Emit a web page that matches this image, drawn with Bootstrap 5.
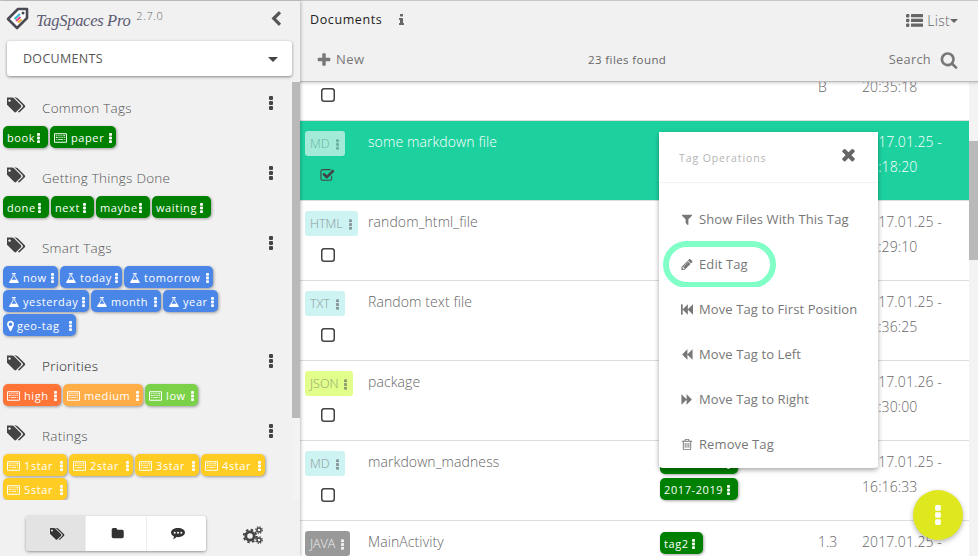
<!DOCTYPE html>
<html lang="en">
<head>
<meta charset="utf-8">
<title>TagSpaces Pro</title>
<link href="https://cdn.jsdelivr.net/npm/bootstrap@5.3.0/dist/css/bootstrap.min.css" rel="stylesheet">
<style>
html,body{height:556px;overflow:hidden}
body{font-family:"Open Sans","Liberation Sans",sans-serif;font-size:13px;color:#666;background:#fff;font-weight:300}
.ic{fill:currentColor;display:block;flex:none}
.app-shell{height:556px;border-top:1px solid #ccc}
.side-pane{width:300px;flex:none;background:#f1f1f1;position:relative;z-index:3;box-shadow:1px 0 3px rgba(0,0,0,.25)}
.brand-bar{height:40px;padding:6px 0 0 6px;flex:none}
.brand-name{font-family:"Liberation Serif",serif;font-style:italic;font-size:16.5px;color:#5b5b72;margin-left:7px;margin-top:-1px;line-height:30px;letter-spacing:-.3px}
.brand-ver{font-size:11px;color:#666;margin:2px 0 0 6px;line-height:14px;letter-spacing:.6px}
.brand-back{margin-left:auto;margin-right:16px;margin-top:4px;color:#555}
.loc-pick{width:285px;height:35px;flex:none;margin-left:7px;padding:2px 14px 0 16px;background:#fff;border-radius:3px;box-shadow:0 1px 3px rgba(0,0,0,.45);color:#555;font-size:12.5px;letter-spacing:.3px;font-weight:400;border:0}
.loc-caret{width:0;height:0;border-left:5px solid transparent;border-right:5px solid transparent;border-top:5px solid #444}
.tag-scroll{height:418px;margin-top:6px;flex:none}
.tag-body{width:292px;padding-top:14px}
.tag-rail{width:8px;flex:none;background:#f3f3f3}
.tag-thumb{height:336px;background:#b9b9b9}
.grp{height:70px;padding-left:3px}
.grp-big{height:118px}
.grp-two{height:76px}
.grp-head{height:30px;position:relative}
.grp-icon{margin:0 0 0 4px;color:#444}
.grp-title{margin-left:16px;margin-top:2px;font-size:13.5px;line-height:20px;color:#555;letter-spacing:.25px}
.grp-title-dark{color:#222}
.grp-menu{margin-left:auto;margin-right:19px;color:#444}
.chip{display:inline-flex;align-items:center;height:22px;border-radius:5px;color:#fff;font-size:11px;line-height:14px;font-weight:400;letter-spacing:.6px;padding:1px 4px 0 4px;box-shadow:1px 1px 3px rgba(0,0,0,.35);white-space:nowrap}
.chip .ic:first-child{margin-right:4px}
.chip .kb{margin-left:auto}
.chip-flask{padding-left:5px}
.chip-pin{padding-left:4px}
.chip-pin .ic:first-child{margin-right:3px}
.cw43{width:43px}.cw45{width:45px}.cw46{width:46px}.cw53{width:53px}.cw54{width:54px}.cw55{width:55px}.cw58{width:58px}.cw59{width:59px}.cw62{width:62px}.cw64{width:64px}.cw66{width:66px}.cw70{width:70px}.cw73{width:73px}.cw78{width:78px}.cw80{width:80px}.cw86{width:86px}.cw89{width:89px}
.chip-row{gap:2px}
.chip-green{background:#008000}
.chip-blue{background:#4a86e8}
.chip-red{background:#ff7537}
.chip-orange{background:#ffad46}
.chip-lime{background:#7bd148}
.chip-yellow{background:#ffcc24}
.side-foot{height:56px;flex:none;padding:0 0 0 26px;background:#f1f1f1}
.tab-grp{height:35px;width:180px;border-radius:3px;box-shadow:0 1px 3px rgba(0,0,0,.4);margin-top:16px;overflow:hidden}
.tab-cell{flex:1;background:#fff;color:#333;border-left:1px solid #eee;padding-left:4px}
.tab-on{background:#e3e3e3;border-left:0}
.gear-btn{margin-left:37px;margin-top:26px;color:#444}
.main-pane{min-width:0}
.top-bar{height:81px;background:#f1f1f1;border-bottom:1px solid #bbb;box-shadow:0 1px 3px rgba(0,0,0,.2);position:relative;z-index:2;flex:none}
.top-one{height:38px;padding:0 20px 0 10px}
.crumb{font-size:12.5px;color:#222;letter-spacing:.6px;font-weight:400}
.info-mark{margin-left:17px;color:#666}
.view-btn{margin-left:auto;color:#666;font-size:14px;letter-spacing:.3px}
.view-caret{width:0;height:0;border-left:4px solid transparent;border-right:4px solid transparent;border-top:4px solid #666;margin-top:2px}
.top-two{height:42px;padding:0 20px 0 17px;position:relative}
.new-btn{font-size:13px;letter-spacing:.5px;color:#777;gap:5px;font-weight:400}
.found{position:absolute;left:288px;font-size:11.5px;color:#666;letter-spacing:.4px;font-weight:400}
.find-btn{margin-left:auto;font-size:12.8px;color:#777;gap:9px;letter-spacing:.3px;font-weight:400}
.file-area{height:474px}
.file-list{flex:1;min-width:0}
.file-rail{width:9px;flex:none;background:#f3f3f3}
.file-thumb{height:119px;margin-top:59px;background:#b9b9b9}
.f-row{height:80px;border-bottom:1px solid #ddd;position:relative}
.f-row-end{height:35px;border-bottom:0}
.f-row-cut{height:39px;border-bottom:1px solid #ddd}
.f-row-sel{background:#1dd19f;color:#fff}
.f-left{width:68px;flex:none;padding:10px 0 0 5px}
.f-type{display:inline-flex;align-items:center;height:25px;border-radius:3px;font-size:12.5px;padding:2px 6px 0 5px;color:#8a9a9a;gap:6px}
.t-aqua{background:#cdf3f2}
.t-sel{background:#a3ebd8;color:#6cb3a6}
.t-lime{background:#e1ff8a;color:#8f9f70}
.t-gray{background:#999;color:#eee}
.f-box{margin:12px 0 0 16px;color:#444}
.f-box-top{margin-top:-4px}
.f-box-on{margin-left:14px}
.f-name{flex:1;padding:11px 0 0;font-size:14px;line-height:20px;letter-spacing:.1px;color:#666}
.f-row-sel .f-name{color:#fff}
.f-size{width:44px;flex:none;padding-top:8px;font-size:14px;line-height:25px}
.f-date{width:107px;flex:none;padding-top:8px;font-size:14px;line-height:25px;letter-spacing:.1px}
.f-cut-up{padding-top:0;line-height:10px}
.f-tags{position:absolute;left:360px;top:11px;gap:4px}
.pop-panel{position:absolute;left:659px;top:132px;width:219px;height:336px;z-index:4;border:0;border-radius:4px;box-shadow:0 2px 5px rgba(0,0,0,.35);color:#777}
.pop-head{height:51px;padding:0 20px 0 20px;border-bottom:1px solid #f2f2f2;background:#fff}
.pop-title{font-size:10.5px;color:#b5b5b5;letter-spacing:.9px;font-weight:400;padding-top:4px}
.pop-close{margin-left:auto;color:#666;margin-bottom:5px}
.pop-item{height:45px;padding:0 0 0 22px;gap:6px;font-size:13px;letter-spacing:.1px;color:#777;border:0;background:#fff;position:relative;font-weight:400}
.pop-items{padding-top:14px}
.pop-ring{position:absolute;left:4px;top:-1px;width:113px;height:47px;border:6px solid #80ffc6;border-radius:24px}
.fab-btn{position:absolute;left:913px;top:490px;width:50px;height:50px;border-radius:50%;background:#dfe81f;box-shadow:0 2px 5px rgba(0,0,0,.3);z-index:5;color:#fff}
</style>
</head>
<body>
<svg class="d-none" xmlns="http://www.w3.org/2000/svg">
<symbol id="i-tags" viewBox="0 0 1920 1792"><path d="M384 448q0-53-37.5-90.5t-90.5-37.5-90.5 37.5-37.5 90.5 37.5 90.5 90.5 37.5 90.5-37.5 37.5-90.5zm1067 576q0 53-37 90l-491 492q-39 37-91 37-53 0-90-37l-715-716q-38-37-64.5-101t-26.5-117v-416q0-52 38-90t90-38h416q53 0 117 26.5t102 64.5l715 714q37 39 37 91zm384 0q0 53-37 90l-491 492q-39 37-91 37-36 0-59-14t-53-45l470-470q37-37 37-90 0-52-37-91l-715-714q-38-38-102-64.5t-117-26.5h224q53 0 117 26.5t102 64.5l715 714q37 39 37 91z"/></symbol>
<symbol id="i-kebab" viewBox="0 0 4 14"><rect width="4" height="4" rx="1"/><rect y="5" width="4" height="4" rx="1"/><rect y="10" width="4" height="4" rx="1"/></symbol>
<symbol id="i-keys" viewBox="0 0 14 10"><path fill-rule="evenodd" d="M1 0h12a1 1 0 0 1 1 1v8a1 1 0 0 1-1 1H1a1 1 0 0 1-1-1V1a1 1 0 0 1 1-1zm0 1v8h12V1zM2 2h1v1H2zm2 0h1v1H4zm2 0h1v1H6zm2 0h1v1H8zm2 0h2v1h-2zM2 4h2v1H2zm3 0h1v1H5zm2 0h1v1H7zm2 0h1v1H9zm2 0h1v1h-1zM2 6h1v1H2zm2 0h6v1H4zm7 0h1v1h-1z"/></symbol>
<symbol id="i-flask" viewBox="0 0 1664 1792"><path d="M1591 1448q56 89 21.5 152.5t-140.5 63.5h-1152q-106 0-140.5-63.5t21.5-152.5l503-793v-399h-64q-26 0-45-19t-19-45 19-45 45-19h512q26 0 45 19t19 45-19 45-45 19h-64v399zm-779-725l-272 429h712l-272-429-20-31v-436h-128v436z"/></symbol>
<symbol id="i-pin" viewBox="0 0 1024 1792"><path d="M768 640q0-106-75-181t-181-75-181 75-75 181 75 181 181 75 181-75 75-181zm256 0q0 109-33 179l-364 774q-16 33-47.5 52t-67.5 19-67.5-19-46.5-52l-365-774q-33-70-33-179 0-212 150-362t362-150 362 150 150 362z"/></symbol>
<symbol id="i-back" viewBox="0 0 1792 1792"><path d="M1427 301l-531 531 531 531q19 19 19 45t-19 45l-166 166q-19 19-45 19t-45-19l-742-742q-19-19-19-45t19-45l742-742q19-19 45-19t45 19l166 166q19 19 19 45t-19 45z"/></symbol>
<symbol id="i-plus" viewBox="0 0 1408 1792"><path d="M1408 736v192q0 40-28 68t-68 28h-416v416q0 40-28 68t-68 28h-192q-40 0-68-28t-28-68v-416h-416q-40 0-68-28t-28-68v-192q0-40 28-68t68-28h416v-416q0-40 28-68t68-28h192q40 0 68 28t28 68v416h416q40 0 68 28t28 68z"/></symbol>
<symbol id="i-info" viewBox="0 0 640 1792"><path d="M640 1344v128q0 26-19 45t-45 19h-512q-26 0-45-19t-19-45v-128q0-26 19-45t45-19h64v-384h-64q-26 0-45-19t-19-45v-128q0-26 19-45t45-19h384q26 0 45 19t19 45v576h64q26 0 45 19t19 45zm-128-1152v192q0 26-19 45t-45 19h-256q-26 0-45-19t-19-45v-192q0-26 19-45t45-19h256q26 0 45 19t19 45z"/></symbol>
<symbol id="i-list" viewBox="0 0 17 13"><rect y="0" width="3.4" height="3.4" rx="1.2"/><rect y="4.8" width="3.4" height="3.4" rx="1.2"/><rect y="9.6" width="3.4" height="3.4" rx="1.2"/><rect x="5" y="0" width="12" height="3.2" rx=".5"/><rect x="5" y="4.8" width="12" height="3.2" rx=".5"/><rect x="5" y="9.6" width="12" height="3.2" rx=".5"/></symbol>
<symbol id="i-search" viewBox="0 0 1792 1792"><path d="M1216 832q0-185-131.5-316.5t-316.5-131.5-316.5 131.5-131.5 316.5 131.5 316.5 316.5 131.5 316.5-131.5 131.5-316.5zm512 832q0 52-38 90t-90 38q-54 0-90-38l-343-342q-179 124-399 124-143 0-273.5-55.5t-225-150-150-225-55.5-273.5 55.5-273.5 150-225 225-150 273.5-55.5 273.5 55.5 225 150 150 225 55.5 273.5q0 220-124 399l343 343q37 37 37 90z"/></symbol>
<symbol id="i-x" viewBox="0 0 1792 1792"><path d="M1490 1322q0 40-28 68l-136 136q-28 28-68 28t-68-28l-294-294-294 294q-28 28-68 28t-68-28l-136-136q-28-28-28-68t28-68l294-294-294-294q-28-28-28-68t28-68l136-136q28-28 68-28t68 28l294 294 294-294q28-28 68-28t68 28l136 136q28 28 28 68t-28 68l-294 294 294 294q28 28 28 68z"/></symbol>
<symbol id="i-filter" viewBox="0 0 1408 1792"><path d="M1403 295q17 41-14 70l-493 493v742q0 42-39 59-13 5-25 5-27 0-45-19l-256-256q-19-19-19-45v-486l-493-493q-31-29-14-70 17-39 59-39h1280q42 0 59 39z"/></symbol>
<symbol id="i-pencil" viewBox="0 0 1536 1792"><path d="M363 1536l91-91-235-235-91 91v107h128v128h107zm523-928q0-22-22-22-10 0-17 7l-542 542q-7 7-7 17 0 22 22 22 10 0 17-7l542-542q7-7 7-17zm-54-192l416 416-832 832h-416v-416zm683 96q0 53-37 90l-166 166-416-416 166-165q36-38 90-38 53 0 91 38l235 234q37 39 37 91z"/></symbol>
<symbol id="i-first" viewBox="0 0 1792 1792"><path d="M1747 141q19-19 32-13t13 32v1472q0 26-13 32t-32-13l-710-710q-9-9-13-19v710q0 26-13 32t-32-13l-710-710q-9-9-13-19v678q0 26-19 45t-45 19h-128q-26 0-45-19t-19-45v-1408q0-26 19-45t45-19h128q26 0 45 19t19 45v678q4-10 13-19l710-710q19-19 32-13t13 32v710q4-10 13-19z"/></symbol>
<symbol id="i-left" viewBox="0 0 1792 1792"><path d="M1683 141q19-19 32-13t13 32v1472q0 26-13 32t-32-13l-710-710q-9-9-13-19v710q0 26-13 32t-32-13l-710-710q-19-19-19-45t19-45l710-710q19-19 32-13t13 32v710q4-10 13-19z"/></symbol>
<symbol id="i-right" viewBox="0 0 1792 1792"><path d="M109 1651q-19 19-32 13t-13-32v-1472q0-26 13-32t32 13l710 710q9 9 13 19v-710q0-26 13-32t32 13l710 710q19 19 19 45t-19 45l-710 710q-19 19-32 13t-13-32v-710q-4 10-13 19z"/></symbol>
<symbol id="i-trash" viewBox="0 0 1408 1792"><path d="M512 736v576q0 14-9 23t-23 9h-64q-14 0-23-9t-9-23v-576q0-14 9-23t23-9h64q14 0 23 9t9 23zm256 0v576q0 14-9 23t-23 9h-64q-14 0-23-9t-9-23v-576q0-14 9-23t23-9h64q14 0 23 9t9 23zm256 0v576q0 14-9 23t-23 9h-64q-14 0-23-9t-9-23v-576q0-14 9-23t23-9h64q14 0 23 9t9 23zm128 724v-948h-896v948q0 22 7 40.5t14.5 27 10.5 8.5h832q3 0 10.5-8.5t14.5-27 7-40.5zm-672-1076h448l-48-117q-7-9-17-11h-317q-10 2-17 11zm928 32v64q0 14-9 23t-23 9h-96v948q0 83-47 143.5t-113 60.5h-832q-66 0-113-60.5t-47-141.5v-952h-96q-14 0-23-9t-9-23v-64q0-14 9-23t23-9h309l70-167q15-37 54-63t79-26h320q40 0 79 26t54 63l70 167h309q14 0 23 9t9 23z"/></symbol>
<symbol id="i-check" viewBox="0 0 1703 1792"><path d="M1472 930v318q0 119-84.5 203.5t-203.5 84.5h-832q-119 0-203.5-84.5t-84.5-203.5v-832q0-119 84.5-203.5t203.5-84.5h832q63 0 117 25 15 7 18 23 3 17-9 29l-49 49q-10 10-23 10-3 0-9-2-23-6-45-6h-832q-66 0-113 47t-47 113v832q0 66 47 113t113 47h832q66 0 113-47t47-113v-254q0-13 9-22l64-64q10-10 23-10 6 0 12 3 20 8 20 29zm231-489l-814 814q-24 24-57 24t-57-24l-430-430q-24-24-24-57t24-57l110-110q24-24 57-24t57 24l263 263 647-647q24-24 57-24t57 24l110 110q24 24 24 57t-24 57z"/></symbol>
<symbol id="i-box" viewBox="0 0 14 14"><rect x=".75" y=".75" width="12.5" height="12.5" rx="2.5" fill="none" stroke="currentColor" stroke-width="1.5"/></symbol>
<symbol id="i-folder" viewBox="0 0 1728 1792"><path d="M1728 608v704q0 92-66 158t-158 66h-1216q-92 0-158-66t-66-158v-960q0-92 66-158t158-66h320q92 0 158 66t66 158v32h672q92 0 158 66t66 158z"/></symbol>
<symbol id="i-chat" viewBox="0 0 14 12"><path fill-rule="evenodd" d="M7 0c3.900 0 7 2 7 4.600S10.900 9.200 7 9.200c-.5 0-1 0-1.500-.1C4.600 10.200 3.200 11.200 2 11.500c.6-.8 1-1.700 1-2.900C1.200 7.800 0 6.300 0 4.600 0 2 3.100 0 7 0zM3.700 3.700a1 1 0 1 0 0 2 1 1 0 0 0 0-2zm3.300 0a1 1 0 1 0 0 2 1 1 0 0 0 0-2zm3.300 0a1 1 0 1 0 0 2 1 1 0 0 0 0-2z"/></symbol>
<symbol id="i-gears" viewBox="0 0 20 18"><circle cx="7" cy="10" r="4.200" fill="none" stroke="currentColor" stroke-width="2.800"/><circle cx="7" cy="10" r="6.300" fill="none" stroke="currentColor" stroke-width="1.800" stroke-dasharray="2.500 2.450"/><circle cx="16" cy="4" r="2" fill="none" stroke="currentColor" stroke-width="1.500"/><circle cx="16" cy="4" r="3.300" fill="none" stroke="currentColor" stroke-width="1.200" stroke-dasharray="1.300 1.300"/><circle cx="16" cy="14" r="2" fill="none" stroke="currentColor" stroke-width="1.500"/><circle cx="16" cy="14" r="3.300" fill="none" stroke="currentColor" stroke-width="1.200" stroke-dasharray="1.300 1.300"/></symbol>
</svg>

<div class="app-shell d-flex">
  <aside class="side-pane d-flex flex-column">
    <div class="brand-bar d-flex align-items-start">
      <svg width="23" height="23" viewBox="0 0 23 23" class="ic"><path d="M21 2 L21 11 L11 21 L2 12 L12 2 Z" fill="#fff" stroke="#4a4a55" stroke-width="2.600" stroke-linejoin="round"/><circle cx="17" cy="6" r="1.500" fill="#4a4a55"/><path d="M8.500 12 L14 7" stroke="#35b6c9" stroke-width="2.200"/><path d="M10 14 L14.500 10" stroke="#e0458f" stroke-width="2.200"/><path d="M12 15.500 L15.500 12.500" stroke="#f5a623" stroke-width="2"/></svg>
      <span class="brand-name">TagSpaces Pro</span>
      <span class="brand-ver">2.7.0</span>
      <svg class="ic brand-back" width="16" height="16"><use href="#i-back"/></svg>
    </div>
    <button class="loc-pick btn d-flex align-items-center justify-content-between" type="button">DOCUMENTS<span class="loc-caret"></span></button>
    <div class="tag-scroll d-flex">
      <div class="tag-body">
        <section class="grp">
          <div class="grp-head d-flex"><svg class="ic grp-icon" width="19" height="18"><use href="#i-tags"/></svg><span class="grp-title">Common Tags</span><svg class="ic grp-menu" width="4" height="14"><use href="#i-kebab"/></svg></div>
          <div class="chip-row d-flex flex-wrap">
            <span class="chip chip-green cw45">book<svg class="ic kb" width="3" height="10"><use href="#i-kebab"/></svg></span>
            <span class="chip chip-green cw66"><svg class="ic" width="13" height="10"><use href="#i-keys"/></svg>paper<svg class="ic kb" width="3" height="10"><use href="#i-kebab"/></svg></span>
          </div>
        </section>
        <section class="grp">
          <div class="grp-head d-flex"><svg class="ic grp-icon" width="19" height="18"><use href="#i-tags"/></svg><span class="grp-title">Getting Things Done</span><svg class="ic grp-menu" width="4" height="14"><use href="#i-kebab"/></svg></div>
          <div class="chip-row d-flex flex-wrap">
            <span class="chip chip-green cw46">done<svg class="ic kb" width="3" height="10"><use href="#i-kebab"/></svg></span>
            <span class="chip chip-green cw43">next<svg class="ic kb" width="3" height="10"><use href="#i-kebab"/></svg></span>
            <span class="chip chip-green cw54">maybe<svg class="ic kb" width="3" height="10"><use href="#i-kebab"/></svg></span>
            <span class="chip chip-green cw59">waiting<svg class="ic kb" width="3" height="10"><use href="#i-kebab"/></svg></span>
          </div>
        </section>
        <section class="grp grp-big">
          <div class="grp-head d-flex"><svg class="ic grp-icon" width="19" height="18"><use href="#i-tags"/></svg><span class="grp-title">Smart Tags</span><svg class="ic grp-menu" width="4" height="14"><use href="#i-kebab"/></svg></div>
          <div class="chip-row d-flex flex-wrap">
            <span class="chip chip-blue chip-flask cw55"><svg class="ic" width="11" height="12"><use href="#i-flask"/></svg>now<svg class="ic kb" width="3" height="10"><use href="#i-kebab"/></svg></span>
            <span class="chip chip-blue chip-flask cw62"><svg class="ic" width="11" height="12"><use href="#i-flask"/></svg>today<svg class="ic kb" width="3" height="10"><use href="#i-kebab"/></svg></span>
            <span class="chip chip-blue chip-flask cw89"><svg class="ic" width="11" height="12"><use href="#i-flask"/></svg>tomorrow<svg class="ic kb" width="3" height="10"><use href="#i-kebab"/></svg></span>
            <span class="chip chip-blue chip-flask cw86"><svg class="ic" width="11" height="12"><use href="#i-flask"/></svg>yesterday<svg class="ic kb" width="3" height="10"><use href="#i-kebab"/></svg></span>
            <span class="chip chip-blue chip-flask cw70"><svg class="ic" width="11" height="12"><use href="#i-flask"/></svg>month<svg class="ic kb" width="3" height="10"><use href="#i-kebab"/></svg></span>
            <span class="chip chip-blue chip-flask cw55"><svg class="ic" width="11" height="12"><use href="#i-flask"/></svg>year<svg class="ic kb" width="3" height="10"><use href="#i-kebab"/></svg></span>
            <span class="chip chip-blue chip-pin cw73"><svg class="ic" width="7" height="12"><use href="#i-pin"/></svg>geo-tag<svg class="ic kb" width="3" height="10"><use href="#i-kebab"/></svg></span>
          </div>
        </section>
        <section class="grp">
          <div class="grp-head d-flex"><svg class="ic grp-icon" width="19" height="18"><use href="#i-tags"/></svg><span class="grp-title grp-title-dark">Priorities</span><svg class="ic grp-menu" width="4" height="14"><use href="#i-kebab"/></svg></div>
          <div class="chip-row d-flex flex-wrap">
            <span class="chip chip-red cw58"><svg class="ic" width="13" height="10"><use href="#i-keys"/></svg>high<svg class="ic kb" width="3" height="10"><use href="#i-kebab"/></svg></span>
            <span class="chip chip-orange cw80"><svg class="ic" width="13" height="10"><use href="#i-keys"/></svg>medium<svg class="ic kb" width="3" height="10"><use href="#i-kebab"/></svg></span>
            <span class="chip chip-lime cw53"><svg class="ic" width="13" height="10"><use href="#i-keys"/></svg>low<svg class="ic kb" width="3" height="10"><use href="#i-kebab"/></svg></span>
          </div>
        </section>
        <section class="grp grp-two">
          <div class="grp-head d-flex"><svg class="ic grp-icon" width="19" height="18"><use href="#i-tags"/></svg><span class="grp-title">Ratings</span><svg class="ic grp-menu" width="4" height="14"><use href="#i-kebab"/></svg></div>
          <div class="chip-row d-flex flex-wrap">
            <span class="chip chip-yellow cw64"><svg class="ic" width="13" height="10"><use href="#i-keys"/></svg>1star<svg class="ic kb" width="3" height="10"><use href="#i-kebab"/></svg></span>
            <span class="chip chip-yellow cw64"><svg class="ic" width="13" height="10"><use href="#i-keys"/></svg>2star<svg class="ic kb" width="3" height="10"><use href="#i-kebab"/></svg></span>
            <span class="chip chip-yellow cw64"><svg class="ic" width="13" height="10"><use href="#i-keys"/></svg>3star<svg class="ic kb" width="3" height="10"><use href="#i-kebab"/></svg></span>
            <span class="chip chip-yellow cw64"><svg class="ic" width="13" height="10"><use href="#i-keys"/></svg>4star<svg class="ic kb" width="3" height="10"><use href="#i-kebab"/></svg></span>
            <span class="chip chip-yellow cw64"><svg class="ic" width="13" height="10"><use href="#i-keys"/></svg>5star<svg class="ic kb" width="3" height="10"><use href="#i-kebab"/></svg></span>
          </div>
        </section>
      </div>
      <div class="tag-rail"><div class="tag-thumb"></div></div>
    </div>
    <div class="side-foot d-flex align-items-start">
      <div class="tab-grp d-flex">
        <div class="tab-cell tab-on d-flex align-items-center justify-content-center"><svg class="ic" width="15" height="14"><use href="#i-tags"/></svg></div>
        <div class="tab-cell d-flex align-items-center justify-content-center"><svg class="ic" width="13" height="13"><use href="#i-folder"/></svg></div>
        <div class="tab-cell d-flex align-items-center justify-content-center"><svg class="ic" width="14" height="12"><use href="#i-chat"/></svg></div>
      </div>
      <svg class="ic gear-btn" width="20" height="18"><use href="#i-gears"/></svg>
    </div>
  </aside>

  <main class="main-pane flex-grow-1 d-flex flex-column">
    <header class="top-bar">
      <div class="top-one d-flex align-items-center">
        <span class="crumb">Documents</span>
        <svg class="ic info-mark" width="5" height="14"><use href="#i-info"/></svg>
        <span class="view-btn d-flex align-items-center"><svg class="ic me-1" width="17" height="13"><use href="#i-list"/></svg>List<span class="view-caret"></span></span>
      </div>
      <div class="top-two d-flex align-items-center">
        <span class="new-btn d-flex align-items-center"><svg class="ic" width="14" height="16"><use href="#i-plus"/></svg>New</span>
        <span class="found">23 files found</span>
        <span class="find-btn d-flex align-items-center">Search<svg class="ic" width="18" height="18"><use href="#i-search"/></svg></span>
      </div>
    </header>
    <div class="file-area d-flex">
      <div class="file-list">
        <div class="f-row-cut d-flex">
          <div class="f-left"><svg class="ic f-box f-box-top" width="14" height="14"><use href="#i-box"/></svg></div>
          <div class="f-name"></div>
          <div class="f-size f-cut-up">B</div>
          <div class="f-date f-cut-up">20:35:18</div>
        </div>
        <div class="f-row f-row-sel d-flex">
          <div class="f-left"><span class="f-type t-sel">MD<svg class="ic" width="3" height="11"><use href="#i-kebab"/></svg></span><svg class="ic f-box f-box-on" width="16" height="15"><use href="#i-check"/></svg></div>
          <div class="f-name">some markdown file</div>
          <div class="f-size"></div>
          <div class="f-date">2017.01.25 -<br>16:18:20</div>
        </div>
        <div class="f-row d-flex">
          <div class="f-left"><span class="f-type t-aqua">HTML<svg class="ic" width="3" height="11"><use href="#i-kebab"/></svg></span><svg class="ic f-box" width="14" height="14"><use href="#i-box"/></svg></div>
          <div class="f-name">random_html_file</div>
          <div class="f-size"></div>
          <div class="f-date">2017.01.25 -<br>16:29:10</div>
        </div>
        <div class="f-row d-flex">
          <div class="f-left"><span class="f-type t-aqua">TXT<svg class="ic" width="3" height="11"><use href="#i-kebab"/></svg></span><svg class="ic f-box" width="14" height="14"><use href="#i-box"/></svg></div>
          <div class="f-name">Random text file</div>
          <div class="f-size"></div>
          <div class="f-date">2017.01.25 -<br>16:36:25</div>
        </div>
        <div class="f-row d-flex">
          <div class="f-left"><span class="f-type t-lime">JSON<svg class="ic" width="3" height="11"><use href="#i-kebab"/></svg></span><svg class="ic f-box" width="14" height="14"><use href="#i-box"/></svg></div>
          <div class="f-name">package</div>
          <div class="f-size"></div>
          <div class="f-date">2017.01.26 -<br>16:30:00</div>
        </div>
        <div class="f-row d-flex">
          <div class="f-left"><span class="f-type t-aqua">MD<svg class="ic" width="3" height="11"><use href="#i-kebab"/></svg></span><svg class="ic f-box" width="14" height="14"><use href="#i-box"/></svg></div>
          <div class="f-name">markdown_madness</div>
          <div class="f-size"></div>
          <div class="f-date">2017.01.25 -<br>16:16:33</div>
          <div class="f-tags d-flex flex-column">
            <span class="chip chip-green cw78 align-self-start">2017-2019<svg class="ic kb" width="3" height="10"><use href="#i-kebab"/></svg></span>
            <span class="chip chip-green cw78 align-self-start">2017-2019<svg class="ic kb" width="3" height="10"><use href="#i-kebab"/></svg></span>
          </div>
        </div>
        <div class="f-row f-row-end d-flex">
          <div class="f-left"><span class="f-type t-gray">JAVA<svg class="ic" width="3" height="11"><use href="#i-kebab"/></svg></span></div>
          <div class="f-name">MainActivity</div>
          <div class="f-size">1.3</div>
          <div class="f-date">2017.01.25 -</div>
          <div class="f-tags d-flex flex-column"><span class="chip chip-green cw43 align-self-start">tag2<svg class="ic kb" width="3" height="10"><use href="#i-kebab"/></svg></span></div>
        </div>
      </div>
      <div class="file-rail"><div class="file-thumb"></div></div>
    </div>
  </main>
</div>

<div class="pop-panel card">
  <div class="pop-head d-flex align-items-center"><span class="pop-title">Tag Operations</span><svg class="ic pop-close" width="19" height="19"><use href="#i-x"/></svg></div>
  <div class="pop-items list-group list-group-flush">
    <div class="pop-item d-flex align-items-center"><svg class="ic" width="12" height="13"><use href="#i-filter"/></svg>Show Files With This Tag</div>
    <div class="pop-item d-flex align-items-center"><svg class="ic" width="12" height="13"><use href="#i-pencil"/></svg>Edit Tag<span class="pop-ring"></span></div>
    <div class="pop-item d-flex align-items-center"><svg class="ic" width="12" height="13"><use href="#i-first"/></svg>Move Tag to First Position</div>
    <div class="pop-item d-flex align-items-center"><svg class="ic" width="12" height="13"><use href="#i-left"/></svg>Move Tag to Left</div>
    <div class="pop-item d-flex align-items-center"><svg class="ic" width="12" height="13"><use href="#i-right"/></svg>Move Tag to Right</div>
    <div class="pop-item d-flex align-items-center"><svg class="ic" width="12" height="13"><use href="#i-trash"/></svg>Remove Tag</div>
  </div>
</div>
<div class="fab-btn d-flex align-items-center justify-content-center"><svg class="ic" width="6" height="20"><use href="#i-kebab"/></svg></div>
</body>
</html>
